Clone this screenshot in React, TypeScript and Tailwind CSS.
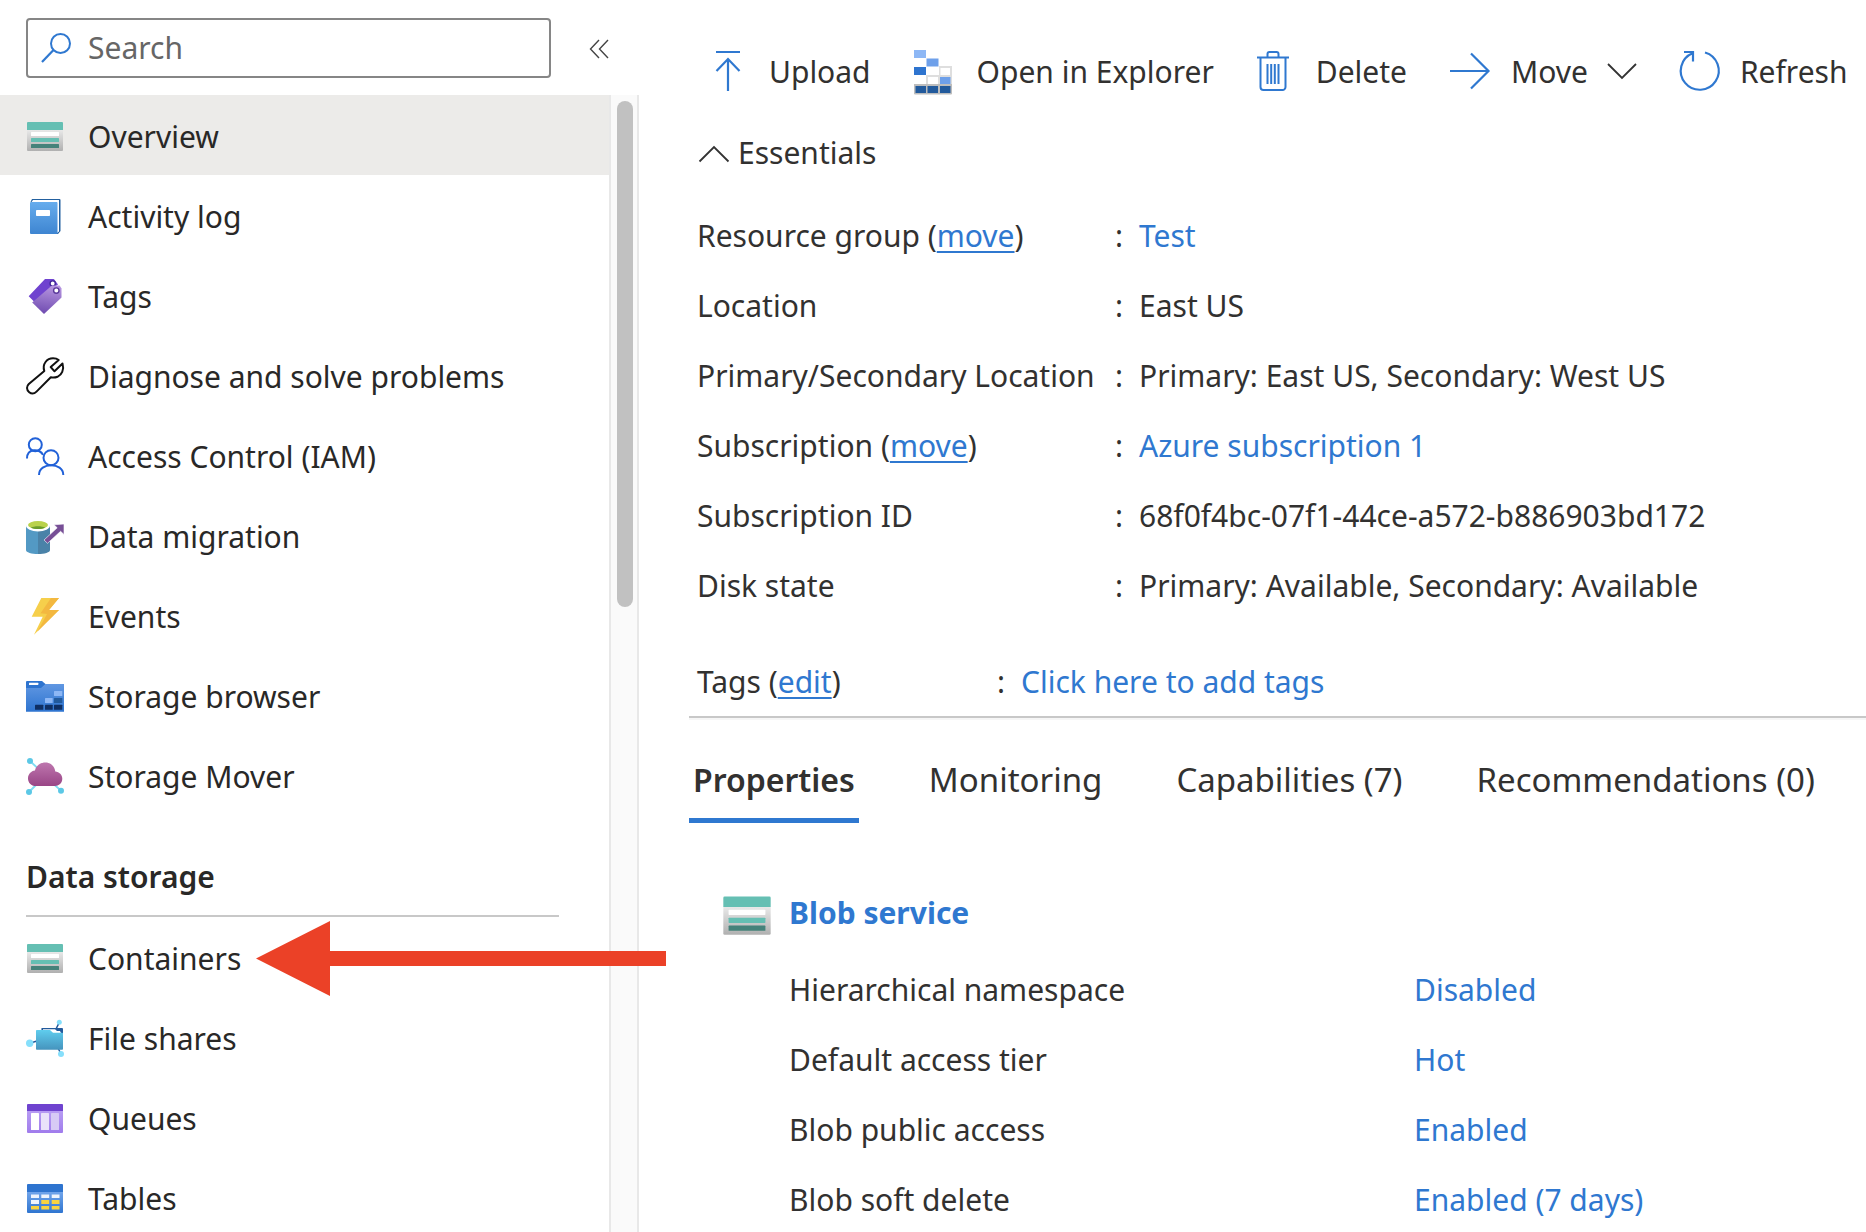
import React from "react";

type IconProps = { className?: string };

function Svg({ children, className = "size-[38px]", box = "0 0 38 38" }: { children: React.ReactNode; className?: string; box?: string }) {
  return (
    <svg viewBox={box} className={`shrink-0 overflow-visible ${className}`} fill="none" aria-hidden="true">
      {children}
    </svg>
  );
}

function StorageIcon({ className }: IconProps) {
  return (
    <Svg className={className}>
      <defs>
        <linearGradient id="storageBody" x1="0" y1="13" x2="0" y2="34" gradientUnits="userSpaceOnUse">
          <stop stopColor="#e8e8e8" />
          <stop offset="1" stopColor="#b0b0b0" />
        </linearGradient>
      </defs>
      <path d="M1 13h36v20a1 1 0 0 1-1 1H2a1 1 0 0 1-1-1z" fill="url(#storageBody)" />
      <path d="M2 5h34a1 1 0 0 1 1 1v7H1V6a1 1 0 0 1 1-1z" fill="#65bfb3" />
      <rect x="5" y="15" width="28" height="4" rx=".5" fill="#fff" />
      <rect x="5" y="21" width="28" height="4" rx=".5" fill="#65bfb3" />
      <rect x="5" y="27" width="28" height="4" rx=".5" fill="#45827a" />
    </Svg>
  );
}

function LogIcon() {
  return (
    <Svg>
      <defs>
        <linearGradient id="logCover" x1="0" y1="4" x2="0" y2="37" gradientUnits="userSpaceOnUse">
          <stop stopColor="#68aeee" />
          <stop offset="1" stopColor="#3e85d1" />
        </linearGradient>
      </defs>
      <path d="M6 2h27.500a1 1 0 0 1 1 1v31l-2.500 3H29V5H4.500z" fill="#23609f" />
      <path d="M7 3h26v31.500L31 36V5H5.500z" fill="#fff" />
      <path d="M5 5h25.500a1 1 0 0 1 1 1v31H5a1 1 0 0 1-1-1V6a1 1 0 0 1 1-1z" fill="url(#logCover)" />
      <rect x="10" y="13" width="14" height="6" rx=".8" fill="#fff" />
    </Svg>
  );
}

function TagsIcon() {
  return (
    <Svg>
      <defs>
        <linearGradient id="tagFront" x1="22" y1="8" x2="18" y2="37" gradientUnits="userSpaceOnUse">
          <stop stopColor="#b796e0" />
          <stop offset="1" stopColor="#6f4bb0" />
        </linearGradient>
      </defs>
      <path d="M19 2h8.500a1 1 0 0 1 .8.400L32 7.500 8 24.500 2.700 19.200z" fill="#6f43cf" />
      <circle cx="26.700" cy="6.500" r="2.600" fill="#fff" stroke="#43289a" strokeWidth="1.400" />
      <path d="M25 9.200c.6-.5 1.200-.8 2-.8h6.600l1.900 3v9.200L18 37 6.200 25.500z" fill="url(#tagFront)" />
      <circle cx="30.300" cy="13.600" r="2.700" fill="#fff" stroke="#5b3a9b" strokeWidth="1.400" />
    </Svg>
  );
}

function WrenchIcon() {
  return (
    <Svg>
      <path
        d="M18.300 14C16 7 21 1.300 27 1.300c2.300 0 4.200.5 5.700 1.700L24.700 10l3.800 4.300 8-7.800C38.500 13 35.500 18 31.500 19.800c-2.300.9-4.600 1-6.700.5L10.500 34.600c-2 2-5 2.500-7.300.6-3-2.500-2.700-6-.4-8.200z"
        stroke="#111"
        strokeWidth="2"
        strokeLinejoin="round"
      />
    </Svg>
  );
}

function PeopleIcon() {
  return (
    <Svg>
      <g stroke="#2161d8" strokeWidth="2">
        <circle cx="9.300" cy="7.700" r="6.500" />
        <path d="M1 21.500C1 10.500 14.500 11.500 17 18" />
        <circle cx="25" cy="20.700" r="7.500" />
        <path d="M13 38c0-13 24.300-13 24.300 0" />
      </g>
    </Svg>
  );
}

function MigrationIcon() {
  return (
    <Svg>
      <path d="M0 8v25c0 2.500 5.500 4 12 4V8z" fill="#5399c4" />
      <path d="M24 8v25c0 2.500-5.500 4-12 4V8z" fill="#4a82a8" />
      <ellipse cx="12" cy="8.500" rx="12" ry="6" fill="#fff" />
      <ellipse cx="12" cy="8" rx="10" ry="4" fill="#b9d24b" />
      <path d="M4.800 10.800C8 8.800 16 8.800 19.200 10.800 16 12.400 8 12.400 4.800 10.800z" fill="#6a9c2b" />
      <path d="M38 7v10.500l-3.400-3.200L21.500 26.300 18 23 31.200 10.800 28 7.800z" fill="#774f96" stroke="#fff" strokeWidth=".6" />
    </Svg>
  );
}

function EventsIcon() {
  return (
    <Svg>
      <path d="M15.300 1H33L23 13h10L8 37.700l8.700-18h-11z" fill="#f6cf4b" />
      <path d="M25 1h8L23 13h10L11.500 34.500 21 17l-6.500-.8z" fill="#f3b840" />
    </Svg>
  );
}

function BrowserIcon() {
  return (
    <Svg>
      <defs>
        <linearGradient id="browserBody" x1="0" y1="7" x2="0" y2="34" gradientUnits="userSpaceOnUse">
          <stop stopColor="#6097e2" />
          <stop offset="1" stopColor="#2f75d0" />
        </linearGradient>
      </defs>
      <path d="M1 4h15l4 3.500L16 11H0V5a1 1 0 0 1 1-1z" fill="#2e74cf" />
      <path d="M0 11h15l4.500-4H38v27.700H0z" fill="url(#browserBody)" />
      <rect x="3" y="5.700" width="9.300" height="2.300" rx=".5" fill="#fff" />
      <g fill="#8db7f5">
        <rect x="28" y="14" width="8.300" height="5" rx=".5" />
        <rect x="19" y="21" width="7.700" height="5" rx=".5" />
      </g>
      <rect x="28" y="21" width="8.300" height="5" rx=".5" fill="#225a9c" />
      <g fill="#0f2f63">
        <rect x="9" y="27.700" width="8.300" height="5" rx=".5" />
        <rect x="19" y="27.700" width="7.700" height="5" rx=".5" />
        <rect x="28" y="27.700" width="8.300" height="5" rx=".5" />
      </g>
    </Svg>
  );
}

function MoverIcon() {
  return (
    <Svg>
      <defs>
        <linearGradient id="moverCloud" x1="0" y1="6" x2="0" y2="29" gradientUnits="userSpaceOnUse">
          <stop stopColor="#bd75ad" />
          <stop offset="1" stopColor="#994586" />
        </linearGradient>
      </defs>
      <path d="M4 4l8 7.500M3 35l8-8M35 33.700L27.500 27" stroke="#7fdcf2" strokeWidth="1.800" />
      <g fill="#5cc8e6">
        <circle cx="4" cy="4" r="3" />
        <circle cx="3" cy="35" r="3" />
        <circle cx="35" cy="33.700" r="3" />
      </g>
      <path d="M10 29c-5 0-8-3.300-8-7.800 0-4 3-7.300 7-7.800C10 9 14 5.500 19.500 5.500c5.500 0 9.300 4 9.800 9 4 .4 7 3.300 7 7.300 0 4.200-3.500 7.200-7.500 7.200z" fill="url(#moverCloud)" />
    </Svg>
  );
}

function SharesIcon() {
  return (
    <Svg>
      <defs>
        <linearGradient id="sharesFolder" x1="0" y1="11" x2="0" y2="31" gradientUnits="userSpaceOnUse">
          <stop stopColor="#5fcdee" />
          <stop offset="1" stopColor="#4593bd" />
        </linearGradient>
      </defs>
      <path d="M33.300 3.300L30 10M3.700 24.300L11 22M35 35l-3-6" stroke="#225a9c" strokeWidth="1.500" />
      <path d="M15.500 9H36a1 1 0 0 1 1 1v6H15z" fill="#225a9c" />
      <path d="M17 10.200h12l2 1.800h3l1 2H17z" fill="#fff" />
      <path d="M10.800 11H24l3 2.700h9.200a.8.800 0 0 1 .8.800V30a.8.800 0 0 1-.8.800H10.800A.8.800 0 0 1 10 30V11.800a.8.800 0 0 1 .8-.8z" fill="url(#sharesFolder)" />
      <g fill="#86dffb">
        <circle cx="33.300" cy="3.300" r="2.500" />
        <circle cx="3.700" cy="24.300" r="3.700" />
        <circle cx="35" cy="35" r="3" />
      </g>
    </Svg>
  );
}

function QueuesIcon() {
  return (
    <Svg>
      <defs>
        <linearGradient id="queuesBody" x1="0" y1="12" x2="0" y2="34" gradientUnits="userSpaceOnUse">
          <stop stopColor="#b79cf3" />
          <stop offset="1" stopColor="#a07cec" />
        </linearGradient>
      </defs>
      <path d="M1 12h36v21a1 1 0 0 1-1 1H2a1 1 0 0 1-1-1z" fill="url(#queuesBody)" />
      <path d="M2 5h34a1 1 0 0 1 1 1v6H1V6a1 1 0 0 1 1-1z" fill="#6f43cf" />
      <rect x="5" y="14" width="8" height="17" rx=".6" fill="#fff" />
      <rect x="15" y="14" width="8" height="17" rx=".6" fill="#eae2fa" />
      <rect x="25" y="14" width="8" height="17" rx=".6" fill="#d7caf5" />
    </Svg>
  );
}

function TablesIcon() {
  return (
    <Svg>
      <defs>
        <linearGradient id="tablesBody" x1="0" y1="13" x2="0" y2="34" gradientUnits="userSpaceOnUse">
          <stop stopColor="#70a4ea" />
          <stop offset="1" stopColor="#2f75d0" />
        </linearGradient>
      </defs>
      <path d="M1 13h36v20a1 1 0 0 1-1 1H2a1 1 0 0 1-1-1z" fill="url(#tablesBody)" />
      <path d="M2 5h34a1 1 0 0 1 1 1v7H1V6a1 1 0 0 1 1-1z" fill="#2e74cf" />
      <path d="M5 15.500h8V19H5zM15.300 15.500h7.900V19h-7.900zM25.700 15.500h7.800V19h-7.800zM5 21h8v4H5z" fill="#eef4fd" />
      <path d="M15.300 21h7.900v4h-7.900zM25.700 21h7.800v4h-7.800zM5 27h8v3.500H5zM15.300 27h7.900v3.500h-7.900zM25.700 27h7.800v3.500h-7.800z" fill="#f8d33f" />
    </Svg>
  );
}

function UploadIcon() {
  return (
    <Svg className="h-[42px] w-[26px]" box="0 0 26 42">
      <path d="M1 1h24M13 40V8M1.500 20L13 8l11.500 12" stroke="#2f78d0" strokeWidth="2.200" />
    </Svg>
  );
}

function ExplorerIcon() {
  return (
    <Svg className="h-[46px] w-[40px]" box="0 0 40 46">
      <path d="M26 17h13v19H13V26h13z" fill="#dedede" />
      <path d="M1 35h38v9.500a1 1 0 0 1-1 1H2a1 1 0 0 1-1-1z" fill="#bdbdbd" />
      <path d="M14 18h11v7.500H14zM27.500 19H37v7h-9.500zM15 28h10v7H15z" fill="#fff" />
      <path d="M1 1h12v8H1z" fill="#8db7f5" />
      <path d="M13.500 9.500h12v8h-12zM27 28h10.500v7H27z" fill="#6ea0ea" />
      <path d="M1 18h12v8H1z" fill="#2e74cf" />
      <path d="M2.500 37H13v7H2.500zM14.500 37H25v7H14.500zM27 37h10.500v7H27z" fill="#225a9c" />
    </Svg>
  );
}

function DeleteIcon() {
  return (
    <Svg className="h-[42px] w-[34px]" box="0 0 34 42">
      <path d="M1 6.500h32M11.500 6.500V3a2 2 0 0 1 2-2h7a2 2 0 0 1 2 2v3.500M4.500 6.500V36a3 3 0 0 0 3 3h19a3 3 0 0 0 3-3V6.500M11.500 13v20M15.200 13v20M18.800 13v20M22.500 13v20" stroke="#2f78d0" strokeWidth="2" />
    </Svg>
  );
}

function MoveIcon() {
  return (
    <Svg className="h-[38px] w-[42px]" box="0 0 42 38">
      <path d="M1 18h38.500M22 .5L39.500 18 22 35.500" stroke="#2f78d0" strokeWidth="2.200" />
    </Svg>
  );
}

function RefreshIcon() {
  return (
    <Svg className="size-[42px]" box="0 0 42 42">
      <path d="M14.500 2.200A19 19 0 1 0 27 1.500M6 1h9v9.500" stroke="#2f78d0" strokeWidth="2.200" />
    </Svg>
  );
}

function ChevronUp() {
  return (
    <Svg className="h-[18px] w-8" box="0 0 32 18">
      <path d="M1.500 17.500L16 3l14.500 14.500" stroke="#333" strokeWidth="1.800" />
    </Svg>
  );
}

function ChevronDown() {
  return (
    <Svg className="h-4 w-7" box="0 0 28 16">
      <path d="M0 0l14 14L28 0" stroke="#333" strokeWidth="1.800" />
    </Svg>
  );
}

const mainItems = [
  { label: "Overview", icon: <StorageIcon />, active: true },
  { label: "Activity log", icon: <LogIcon /> },
  { label: "Tags", icon: <TagsIcon /> },
  { label: "Diagnose and solve problems", icon: <WrenchIcon /> },
  { label: "Access Control (IAM)", icon: <PeopleIcon /> },
  { label: "Data migration", icon: <MigrationIcon /> },
  { label: "Events", icon: <EventsIcon /> },
  { label: "Storage browser", icon: <BrowserIcon /> },
  { label: "Storage Mover", icon: <MoverIcon /> },
];

const storageItems = [
  { label: "Containers", icon: <StorageIcon />, pointed: true },
  { label: "File shares", icon: <SharesIcon /> },
  { label: "Queues", icon: <QueuesIcon /> },
  { label: "Tables", icon: <TablesIcon /> },
];

function NavItem({ label, icon, active, pointed }: { label: string; icon: React.ReactNode; active?: boolean; pointed?: boolean }) {
  return (
    <li className="relative">
      <a href="#" aria-current={active ? "page" : undefined} className={`flex h-20 items-center gap-6 pt-0.5 pl-[26px] whitespace-nowrap ${active ? "bg-[#ecebe9]" : ""}`}>
        {icon}
        <span className="pt-0.5">{label}</span>
      </a>
      {pointed && (
        <svg viewBox="0 0 410 75" className="pointer-events-none absolute top-1 left-64 z-10 h-[75px] w-[410px]" aria-hidden="true">
          <path d="M0 37.500L74 0v30h336v15H74v30z" fill="#eb4127" />
        </svg>
      )}
    </li>
  );
}

const essentials = [
  { label: "Resource group", action: "move", value: "Test", link: true },
  { label: "Location", value: "East US" },
  { label: "Primary/Secondary Location", value: "Primary: East US, Secondary: West US" },
  { label: "Subscription", action: "move", value: "Azure subscription 1", link: true },
  { label: "Subscription ID", value: "68f0f4bc-07f1-44ce-a572-b886903bd172" },
  { label: "Disk state", value: "Primary: Available, Secondary: Available" },
];

function Action({ name }: { name: string }) {
  return (
    <>
      {" "}(
      <a href="#" className="text-[#2f78d0] underline decoration-2 underline-offset-4">
        {name}
      </a>
      )
    </>
  );
}

const blobRows = [
  ["Hierarchical namespace", "Disabled"],
  ["Default access tier", "Hot"],
  ["Blob public access", "Enabled"],
  ["Blob soft delete", "Enabled (7 days)"],
];

export default function App() {
  return (
    <div className="flex h-screen overflow-hidden bg-white font-['Noto_Sans','Open_Sans',sans-serif] text-[30px] leading-10 text-[#292827]">
      <aside className="flex w-[639px] shrink-0 flex-col">
        <div className="flex h-[95px] shrink-0 items-start pt-[18px] pl-[26px]">
          <label className="flex h-[60px] w-[525px] items-center gap-4 rounded-[4px] border-2 border-[#868686] pl-3">
            <Svg className="size-8" box="0 0 32 32">
              <circle cx="20.500" cy="11.500" r="9.500" stroke="#2f78d0" strokeWidth="2" />
              <path d="M13.500 18L2 30" stroke="#2f78d0" strokeWidth="2.200" />
            </Svg>
            <input type="text" placeholder="Search" aria-label="Search" className="min-w-0 flex-1 outline-none placeholder:text-[#666]" />
          </label>
          <button type="button" aria-label="Collapse menu" className="mt-[21px] ml-[38px]">
            <Svg className="size-5" box="0 0 20 20">
              <path d="M10 1L1.500 10l8.500 9M19 1l-8.500 9 8.500 9" stroke="#444" strokeWidth="1.400" />
            </Svg>
          </button>
        </div>
        <div className="flex min-h-0 flex-1">
          <nav className="min-w-0 flex-1">
            <ul>
              {mainItems.map((item) => (
                <NavItem key={item.label} {...item} />
              ))}
            </ul>
            <h2 className="mr-[50px] ml-[26px] border-b-2 border-[#c8c8c8] pt-[42px] pb-[18px] font-semibold">Data storage</h2>
            <ul>
              {storageItems.map((item) => (
                <NavItem key={item.label} {...item} />
              ))}
            </ul>
          </nav>
          <div className="w-[30px] border-x-2 border-[#e8e8e8] bg-[#fafafa] px-1.5 pt-1.5">
            <div className="h-[506px] w-4 rounded-full bg-[#c1c1c1]" />
          </div>
        </div>
      </aside>

      <main className="min-w-0 flex-1 text-[#323130]">
        <div className="flex h-36 items-center gap-[42px] pl-[76px] whitespace-nowrap">
          <button type="button" className="flex items-center gap-7">
            <UploadIcon />
            Upload
          </button>
          <button type="button" className="flex items-center gap-6">
            <ExplorerIcon />
            Open in Explorer
          </button>
          <button type="button" className="flex items-center gap-[26px]">
            <DeleteIcon />
            Delete
          </button>
          <button type="button" className="flex items-center gap-5">
            <MoveIcon />
            Move
            <ChevronDown />
          </button>
          <button type="button" className="flex items-center gap-5">
            <RefreshIcon />
            Refresh
          </button>
        </div>

        <button type="button" aria-expanded="true" className="ml-[59px] flex h-[18px] items-center gap-2">
          <ChevronUp />
          Essentials
        </button>
        <dl className="mt-[39px] ml-[58px] whitespace-nowrap">
          {essentials.map((row) => (
            <div key={row.label} className="flex h-[70px] items-center">
              <dt className="w-[418px]">
                {row.label}
                {row.action && <Action name={row.action} />}
              </dt>
              <dd className="flex">
                <span className="w-6">:</span>
                {row.link ? (
                  <a href="#" className="text-[#2f78d0]">
                    {row.value}
                  </a>
                ) : (
                  row.value
                )}
              </dd>
            </div>
          ))}
        </dl>
        <dl className="ml-[50px] flex h-[97px] items-end border-b-2 border-[#c8c8c8] pb-[14px] pl-2 whitespace-nowrap shadow-[0_2px_0_#f6f6f6]">
          <dt className="w-[300px]">
            Tags
            <Action name="edit" />
          </dt>
          <dd className="flex">
            <span className="w-6">:</span>
            <a href="#" className="text-[#2f78d0]">
              Click here to add tags
            </a>
          </dd>
        </dl>

        <div role="tablist" className="ml-[50px] flex h-[105px] items-end gap-[66px] text-[33px] whitespace-nowrap">
          <button type="button" role="tab" aria-selected="true" className="border-b-[5px] border-[#2f78d0] px-1 pb-[18px] text-[32px] font-semibold">
            Properties
          </button>
          <button type="button" role="tab" aria-selected="false" className="px-1 pb-[23px]">
            Monitoring
          </button>
          <button type="button" role="tab" aria-selected="false" className="px-1 pb-[23px]">
            Capabilities (7)
          </button>
          <button type="button" role="tab" aria-selected="false" className="px-1 pb-[23px]">
            Recommendations (0)
          </button>
        </div>

        <section className="mt-[67px] flex gap-[17px] pl-[83px]">
          <StorageIcon className="size-[50px]" />
          <div className="min-w-0 flex-1 pt-[3px] whitespace-nowrap">
            <h2 className="font-bold">
              <a href="#" className="text-[#2f78d0]">
                Blob service
              </a>
            </h2>
            <dl className="mt-[22px]">
              {blobRows.map(([label, value]) => (
                <div key={label} className="flex h-[70px] items-center">
                  <dt className="w-[625px]">{label}</dt>
                  <dd>
                    <a href="#" className="text-[#2f78d0]">
                      {value}
                    </a>
                  </dd>
                </div>
              ))}
            </dl>
          </div>
        </section>
      </main>
    </div>
  );
}
